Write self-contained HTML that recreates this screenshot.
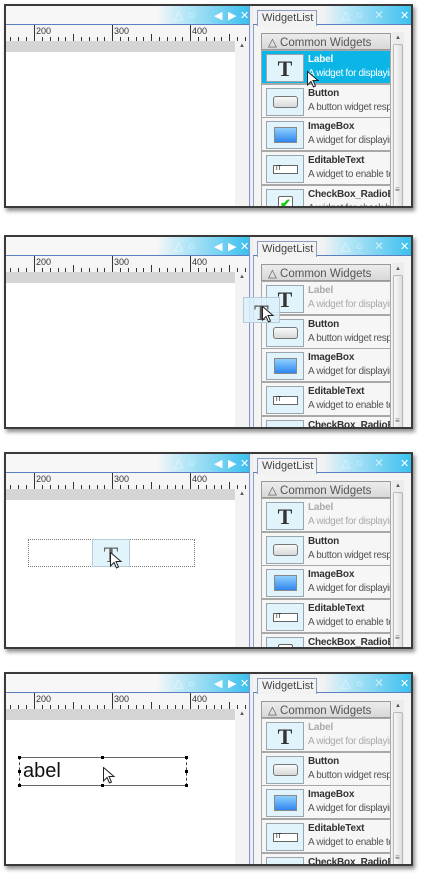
<!DOCTYPE html>
<html><head><meta charset="utf-8"><style>
*{margin:0;padding:0;box-sizing:border-box}
html{width:427px;height:880px;overflow:hidden}
body{width:427px;height:880px;background:#fff;position:relative;overflow:hidden;font-family:"Liberation Sans",sans-serif}
.p{position:absolute;left:4px;width:409px;border:2px solid #3a3a3a;background:#fff;overflow:hidden;box-shadow:2px 3px 4px rgba(0,0,0,.45)}
.a{position:absolute}
.lt{left:0;top:0;width:243px;height:19px;background:linear-gradient(90deg,#f7f7f7 0,#f7f7f7 150px,#bfe9f7 175px,#3cc0ee 243px);border-bottom:1px solid #5b7fc0}
.ic{color:#fff;font-size:11px;top:3px}
.dc{color:rgba(255,255,255,.6);font-size:12px;top:2px}
.gb{left:0;top:35px;width:229px;height:11px;background:#d5d5d5}
.vs{left:229px;top:35px;width:14px;height:170px;background:#f3f3f3}
.sep{left:243px;top:0;width:1px;height:200px;background:#7f95c8}
.gap{left:244px;top:0;width:3px;height:200px;background:#eceef4}
.rp{left:247px;top:0;width:158px;height:200px;background:#f4f4f4;border-left:1px solid #8da0d0}
.rt{left:247px;top:0;width:158px;height:19px;background:linear-gradient(90deg,#f2f2f2 0,#f2f2f2 70px,#bfe9f7 90px,#3cc0ee 158px);border-bottom:1px solid #5b7fc0}
.tab{left:251px;top:4px;width:60px;height:16px;background:#f2f2f2;border:1px solid #8a9bc4;border-bottom:none;font-size:11px;color:#444;padding:1px 0 0 4px}
.hd{left:255px;top:27px;width:130px;height:17px;background:linear-gradient(#ececec,#d8d8d8);border:1px solid #999;font-size:11.5px;color:#555;padding:1px 0 0 6px}
.it{left:255px;width:130px;height:34px;background:#f6f6f6;border:1px solid #a8a8a8;overflow:hidden}
.ib{position:absolute;left:4px;top:3px;width:38px;height:28px;background:#e2f4fb;border:1px solid #9aa6ad}
.t1{position:absolute;left:46px;top:3px;font-size:10px;letter-spacing:-0.2px;font-weight:bold;color:#333;white-space:nowrap}
.t2{position:absolute;left:46px;top:17px;font-size:10px;letter-spacing:-0.35px;color:#555;white-space:nowrap}
.sel{background:#0bb5e6}.sel .t1,.sel .t2{color:#fff}
.dis .t1,.dis .t2{color:#aaa}
.sb{left:386px;top:26px;width:12px;height:180px;background:#ececec}
.th{left:387px;top:38px;width:10px;height:170px;background:linear-gradient(90deg,#f8f8f8,#dedede);border:1px solid #b8b8b8;border-radius:2px}
.TT{position:absolute;left:0;width:100%;text-align:center;font-family:"Liberation Serif",serif;font-weight:bold;font-size:22px;color:#333;top:1px}
</style></head><body>

<svg width="0" height="0" style="position:absolute;left:0;top:0"><defs>
<g id="ruler"><rect width="243" height="16" fill="#f5f5f5"/>
<path stroke="#333" stroke-width="1" fill="none" d="M28.5 0V16M106.5 0V16M184.5 0V16M67.5 9V16M145.5 9V16M223.5 9V16M4.5 12V16M12.5 12V16M20.5 12V16M36.5 12V16M44.5 12V16M52.5 12V16M59.5 12V16M75.5 12V16M83.5 12V16M91.5 12V16M98.5 12V16M114.5 12V16M122.5 12V16M130.5 12V16M137.5 12V16M153.5 12V16M161.5 12V16M169.5 12V16M176.5 12V16M192.5 12V16M200.5 12V16M208.5 12V16M215.5 12V16M231.5 12V16M239.5 12V16"/>
<text x="30" y="9" font-size="9" fill="#333" font-family="Liberation Sans">200</text><text x="108" y="9" font-size="9" fill="#333" font-family="Liberation Sans">300</text><text x="186" y="9" font-size="9" fill="#333" font-family="Liberation Sans">400</text></g>
<path id="cur" d="M0.5 0.5V14L4 10.5L6.5 16L8.5 15L6 9.5H11Z" fill="#fff" stroke="#222" stroke-width="1"/>
</defs></svg>

<div class="p" style="top:4px;height:204px">
<div class="a lt"></div><span class="a dc" style="left:168px">△</span><span class="a dc" style="left:182px">○</span><span class="a ic" style="left:208px">◀</span><span class="a ic" style="left:222px">▶</span><span class="a ic" style="left:234px">✕</span>
<svg class="a" style="left:0;top:19px" width="243" height="16"><use href="#ruler"/></svg>
<div class="a gb"></div><div class="a vs"><span style="position:absolute;left:4px;top:2px;font-size:6px;color:#555">▲</span></div>
<div class="a sep"></div><div class="a gap"></div><div class="a rp"></div><div class="a rt"></div>
<div class="a tab">WidgetList</div><span class="a dc" style="left:335px">△</span><span class="a dc" style="left:350px">○</span><span class="a dc" style="left:368px">✕</span><span class="a ic" style="left:394px">✕</span>
<div class="a hd">△ Common Widgets</div>
<div class="a sb"><span style="position:absolute;left:3px;top:3px;font-size:6px;color:#555">▲</span></div><div class="a th"><span style="position:absolute;left:1px;top:140px;font-size:8px;color:#666">≡</span></div>
<div class="a it sel" style="top:44px"><div class="ib"><div class="TT">T</div></div><div class="t1">Label</div><div class="t2">A widget for displayir</div></div>
<div class="a it" style="top:78px"><div class="ib"><div style="position:absolute;left:6px;top:7px;width:25px;height:12px;border:1px solid #777;border-radius:3px;background:linear-gradient(#fafafa,#d8d8d8)"></div></div><div class="t1">Button</div><div class="t2">A button widget resp</div></div>
<div class="a it" style="top:111px"><div class="ib"><div style="position:absolute;left:7px;top:5px;width:23px;height:16px;border:1px solid #888;background:linear-gradient(#8fd0ff,#2f86f0)"></div></div><div class="t1">ImageBox</div><div class="t2">A widget for displayir</div></div>
<div class="a it" style="top:145px"><div class="ib"><div style="position:absolute;left:6px;top:9px;width:25px;height:9px;border:1px solid #666;background:#fff;font-size:6px;line-height:7px;padding-left:2px">IT</div></div><div class="t1">EditableText</div><div class="t2">A widget to enable te</div></div>
<div class="a it" style="top:179px"><div class="ib"><div style="position:absolute;left:11px;top:6px;width:15px;height:15px;border:1px solid #666;border-radius:2px;background:#fff;color:#1c1;font-size:13px;line-height:13px;text-align:center;font-weight:bold">✔</div></div><div class="t1">CheckBox_RadioB</div><div class="t2">A widget for check bo</div></div>
<svg class="a" style="left:301px;top:65px" width="13" height="17"><use href="#cur"/></svg>
</div>

<div class="p" style="top:235px;height:194px">
<div class="a lt"></div><span class="a dc" style="left:168px">△</span><span class="a dc" style="left:182px">○</span><span class="a ic" style="left:208px">◀</span><span class="a ic" style="left:222px">▶</span><span class="a ic" style="left:234px">✕</span>
<svg class="a" style="left:0;top:19px" width="243" height="16"><use href="#ruler"/></svg>
<div class="a gb"></div><div class="a vs"><span style="position:absolute;left:4px;top:2px;font-size:6px;color:#555">▲</span></div>
<div class="a sep"></div><div class="a gap"></div><div class="a rp"></div><div class="a rt"></div>
<div class="a tab">WidgetList</div><span class="a dc" style="left:335px">△</span><span class="a dc" style="left:350px">○</span><span class="a dc" style="left:368px">✕</span><span class="a ic" style="left:394px">✕</span>
<div class="a hd">△ Common Widgets</div>
<div class="a sb"><span style="position:absolute;left:3px;top:3px;font-size:6px;color:#555">▲</span></div><div class="a th"><span style="position:absolute;left:1px;top:140px;font-size:8px;color:#666">≡</span></div>
<div class="a it dis" style="top:44px"><div class="ib"><div class="TT">T</div></div><div class="t1">Label</div><div class="t2">A widget for displayir</div></div>
<div class="a it" style="top:78px"><div class="ib"><div style="position:absolute;left:6px;top:7px;width:25px;height:12px;border:1px solid #777;border-radius:3px;background:linear-gradient(#fafafa,#d8d8d8)"></div></div><div class="t1">Button</div><div class="t2">A button widget resp</div></div>
<div class="a it" style="top:111px"><div class="ib"><div style="position:absolute;left:7px;top:5px;width:23px;height:16px;border:1px solid #888;background:linear-gradient(#8fd0ff,#2f86f0)"></div></div><div class="t1">ImageBox</div><div class="t2">A widget for displayir</div></div>
<div class="a it" style="top:145px"><div class="ib"><div style="position:absolute;left:6px;top:9px;width:25px;height:9px;border:1px solid #666;background:#fff;font-size:6px;line-height:7px;padding-left:2px">IT</div></div><div class="t1">EditableText</div><div class="t2">A widget to enable te</div></div>
<div class="a it" style="top:179px"><div class="ib"><div style="position:absolute;left:11px;top:6px;width:15px;height:15px;border:1px solid #666;border-radius:2px;background:#fff;color:#1c1;font-size:13px;line-height:13px;text-align:center;font-weight:bold">✔</div></div><div class="t1">CheckBox_RadioB</div><div class="t2">A widget for check bo</div></div>
<div class="a" style="left:237px;top:60px;width:37px;height:26px;background:rgba(218,240,250,.85);border:1px solid #b8ccd8"><div class="TT" style="top:2px;color:#555">T</div></div>
<svg class="a" style="left:256px;top:69px" width="13" height="17"><use href="#cur"/></svg>
</div>

<div class="p" style="top:452px;height:197px">
<div class="a lt"></div><span class="a dc" style="left:168px">△</span><span class="a dc" style="left:182px">○</span><span class="a ic" style="left:208px">◀</span><span class="a ic" style="left:222px">▶</span><span class="a ic" style="left:234px">✕</span>
<svg class="a" style="left:0;top:19px" width="243" height="16"><use href="#ruler"/></svg>
<div class="a gb"></div><div class="a vs"><span style="position:absolute;left:4px;top:2px;font-size:6px;color:#555">▲</span></div>
<div class="a sep"></div><div class="a gap"></div><div class="a rp"></div><div class="a rt"></div>
<div class="a tab">WidgetList</div><span class="a dc" style="left:335px">△</span><span class="a dc" style="left:350px">○</span><span class="a dc" style="left:368px">✕</span><span class="a ic" style="left:394px">✕</span>
<div class="a hd">△ Common Widgets</div>
<div class="a sb"><span style="position:absolute;left:3px;top:3px;font-size:6px;color:#555">▲</span></div><div class="a th"><span style="position:absolute;left:1px;top:140px;font-size:8px;color:#666">≡</span></div>
<div class="a it dis" style="top:44px"><div class="ib"><div class="TT">T</div></div><div class="t1">Label</div><div class="t2">A widget for displayir</div></div>
<div class="a it" style="top:78px"><div class="ib"><div style="position:absolute;left:6px;top:7px;width:25px;height:12px;border:1px solid #777;border-radius:3px;background:linear-gradient(#fafafa,#d8d8d8)"></div></div><div class="t1">Button</div><div class="t2">A button widget resp</div></div>
<div class="a it" style="top:111px"><div class="ib"><div style="position:absolute;left:7px;top:5px;width:23px;height:16px;border:1px solid #888;background:linear-gradient(#8fd0ff,#2f86f0)"></div></div><div class="t1">ImageBox</div><div class="t2">A widget for displayir</div></div>
<div class="a it" style="top:145px"><div class="ib"><div style="position:absolute;left:6px;top:9px;width:25px;height:9px;border:1px solid #666;background:#fff;font-size:6px;line-height:7px;padding-left:2px">IT</div></div><div class="t1">EditableText</div><div class="t2">A widget to enable te</div></div>
<div class="a it" style="top:179px"><div class="ib"><div style="position:absolute;left:11px;top:6px;width:15px;height:15px;border:1px solid #666;border-radius:2px;background:#fff;color:#1c1;font-size:13px;line-height:13px;text-align:center;font-weight:bold">✔</div></div><div class="t1">CheckBox_RadioB</div><div class="t2">A widget for check bo</div></div>
<div class="a" style="left:22px;top:85px;width:167px;height:28px;border:1px dotted #777"></div>
<div class="a" style="left:86px;top:85px;width:38px;height:28px;background:#e2f4fb;border:1px solid #b8ccd8"><div class="TT" style="top:2px;color:#666">T</div></div>
<svg class="a" style="left:104px;top:98px" width="13" height="17"><use href="#cur"/></svg>
</div>

<div class="p" style="top:672px;height:194px">
<div class="a lt"></div><span class="a dc" style="left:168px">△</span><span class="a dc" style="left:182px">○</span><span class="a ic" style="left:208px">◀</span><span class="a ic" style="left:222px">▶</span><span class="a ic" style="left:234px">✕</span>
<svg class="a" style="left:0;top:19px" width="243" height="16"><use href="#ruler"/></svg>
<div class="a gb"></div><div class="a vs"><span style="position:absolute;left:4px;top:2px;font-size:6px;color:#555">▲</span></div>
<div class="a sep"></div><div class="a gap"></div><div class="a rp"></div><div class="a rt"></div>
<div class="a tab">WidgetList</div><span class="a dc" style="left:335px">△</span><span class="a dc" style="left:350px">○</span><span class="a dc" style="left:368px">✕</span><span class="a ic" style="left:394px">✕</span>
<div class="a hd">△ Common Widgets</div>
<div class="a sb"><span style="position:absolute;left:3px;top:3px;font-size:6px;color:#555">▲</span></div><div class="a th"><span style="position:absolute;left:1px;top:140px;font-size:8px;color:#666">≡</span></div>
<div class="a it dis" style="top:44px"><div class="ib"><div class="TT">T</div></div><div class="t1">Label</div><div class="t2">A widget for displayir</div></div>
<div class="a it" style="top:78px"><div class="ib"><div style="position:absolute;left:6px;top:7px;width:25px;height:12px;border:1px solid #777;border-radius:3px;background:linear-gradient(#fafafa,#d8d8d8)"></div></div><div class="t1">Button</div><div class="t2">A button widget resp</div></div>
<div class="a it" style="top:111px"><div class="ib"><div style="position:absolute;left:7px;top:5px;width:23px;height:16px;border:1px solid #888;background:linear-gradient(#8fd0ff,#2f86f0)"></div></div><div class="t1">ImageBox</div><div class="t2">A widget for displayir</div></div>
<div class="a it" style="top:145px"><div class="ib"><div style="position:absolute;left:6px;top:9px;width:25px;height:9px;border:1px solid #666;background:#fff;font-size:6px;line-height:7px;padding-left:2px">IT</div></div><div class="t1">EditableText</div><div class="t2">A widget to enable te</div></div>
<div class="a it" style="top:179px"><div class="ib"><div style="position:absolute;left:11px;top:6px;width:15px;height:15px;border:1px solid #666;border-radius:2px;background:#fff;color:#1c1;font-size:13px;line-height:13px;text-align:center;font-weight:bold">✔</div></div><div class="t1">CheckBox_RadioB</div><div class="t2">A widget for check bo</div></div>
<div class="a" style="left:13px;top:83px;width:168px;height:29px;border-top:1px solid #666;border-bottom:1px solid #666;border-left:1px dashed #444;border-right:1px dashed #444"></div>
<div class="a" style="left:17px;top:86px;font-size:20px;color:#111;line-height:22px">abel</div>
<div class="a" style="left:12px;top:82px;width:3px;height:3px;background:#000"></div>
<div class="a" style="left:95px;top:82px;width:3px;height:3px;background:#000"></div>
<div class="a" style="left:179px;top:82px;width:3px;height:3px;background:#000"></div>
<div class="a" style="left:12px;top:96px;width:3px;height:3px;background:#000"></div>
<div class="a" style="left:179px;top:96px;width:3px;height:3px;background:#000"></div>
<div class="a" style="left:12px;top:110px;width:3px;height:3px;background:#000"></div>
<div class="a" style="left:95px;top:110px;width:3px;height:3px;background:#000"></div>
<div class="a" style="left:179px;top:110px;width:3px;height:3px;background:#000"></div>
<svg class="a" style="left:97px;top:93px" width="13" height="17"><use href="#cur"/></svg>
</div>

</body></html>
